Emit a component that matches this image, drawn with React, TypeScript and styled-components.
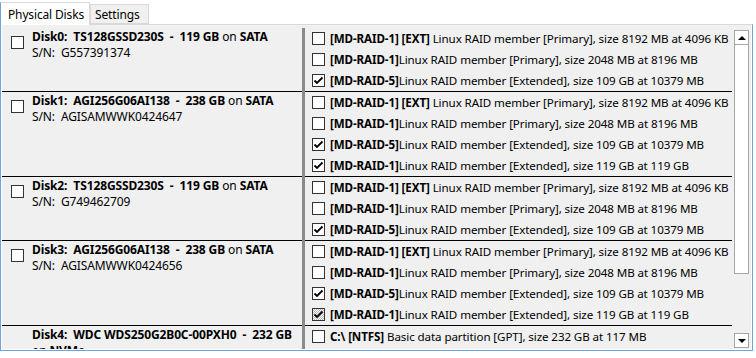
import React from 'react';
import styled, { createGlobalStyle } from 'styled-components';

const GlobalStyle = createGlobalStyle`
  html, body {
    margin: 0;
    padding: 0;
    background: #ffffff;
  }
  body {
    font-family: "Noto Sans", "Segoe UI", sans-serif;
    font-size: 12px;
    color: #000000;
  }
`;

const Window = styled.div`
  width: 756px;
  height: 358px;
  overflow: hidden;
  background: #ffffff;
`;

const TabStrip = styled.div`
  display: flex;
  align-items: flex-end;
  height: 24px;
`;

const Tab = styled.div<{ $active?: boolean }>`
  box-sizing: border-box;
  display: flex;
  align-items: center;
  height: ${({ $active }) => ($active ? '23px' : '20px')};
  padding: ${({ $active }) => ($active ? '0 5px 0 7px' : '0 9px 0 4px')};
  margin-bottom: ${({ $active }) => ($active ? '-1px' : '0')};
  background: ${({ $active }) => ($active ? '#ffffff' : '#f0f0f0')};
  border: 1px solid #d9d9d9;
  border-left-color: ${({ $active }) => ($active ? '#6fa3dc' : '#d9d9d9')};
  border-bottom: ${({ $active }) => ($active ? 'none' : '1px solid #d9d9d9')};
  position: relative;
  z-index: ${({ $active }) => ($active ? 1 : 0)};
  white-space: nowrap;
  letter-spacing: -0.15px;
`;

const Panel = styled.div`
  box-sizing: border-box;
  width: 753px;
  height: 327px;
  border: 1px solid #6fa3dc;
  border-top-color: #d9d9d9;
  padding: 0 1px 1px 1px;
  background: #ffffff;
`;

const ListArea = styled.div`
  display: flex;
  height: 100%;
  background: #f0f0f0;
  padding-top: 3px;
  box-sizing: border-box;
`;

const Rows = styled.div`
  flex: 1;
  overflow: hidden;
`;

const DiskRow = styled.div`
  display: grid;
  grid-template-columns: 300px 3px 1fr;
`;

const LeftCell = styled.div`
  display: flex;
  align-items: flex-start;
  gap: 8px;
  padding: 1px 4px 0 9px;
  border-bottom: 1px solid #000000;
  min-width: 0;
`;

const Divider = styled.div`
  background: #8a8a8a;
`;

const RightCell = styled.div`
  border-bottom: 1px solid #000000;
  min-width: 0;
  overflow: hidden;
`;

const DiskInfo = styled.div`
  line-height: 16px;
  min-width: 0;
  letter-spacing: -0.12px;
`;

const Title = styled.div`
  white-space: pre-wrap;
`;

const Strong = styled.span`
  font-weight: 700;
`;

const Serial = styled.div`
  white-space: pre;
`;

const PartItem = styled.div`
  display: flex;
  align-items: center;
  gap: 5px;
  height: 21px;
  padding-left: 7px;
  white-space: pre;
  overflow: hidden;
  font-size: 11.6px;
  letter-spacing: -0.1px;
`;

const Box = styled.span<{ $mixed?: boolean; $offset?: number }>`
  box-sizing: border-box;
  flex: none;
  display: inline-flex;
  align-items: center;
  justify-content: center;
  width: 13px;
  height: 13px;
  margin-top: ${({ $offset }) => $offset ?? 0}px;
  border: 1px solid #333333;
  background: ${({ $mixed }) =>
    $mixed ? 'repeating-conic-gradient(#b8b8b8 0 25%, #ffffff 0 50%) 0 0 / 2px 2px' : '#ffffff'};
`;

const Spacer = styled.span`
  flex: none;
  width: 13px;
`;

const Scrollbar = styled.div`
  flex: none;
  display: flex;
  flex-direction: column;
  width: 15px;
  margin: 2px 2px 1px 2px;
`;

const ArrowButton = styled.div<{ $down?: boolean }>`
  box-sizing: border-box;
  flex: none;
  height: 15px;
  border: 1px solid #a6a6a6;
  background: #ffffff;
  display: flex;
  align-items: center;
  justify-content: center;
  margin-top: ${({ $down }) => ($down ? 'auto' : '0')};

  &::after {
    content: '';
    border-left: 4px solid transparent;
    border-right: 4px solid transparent;
    ${({ $down }) => ($down ? 'border-top: 4px solid #000;' : 'border-bottom: 4px solid #000;')}
  }
`;

const Thumb = styled.div`
  box-sizing: border-box;
  height: 229px;
  border: 1px solid #a6a6a6;
  border-top: none;
  background: #ffffff;
`;

type Part = {
  label: string;
  desc: string;
  checked?: boolean;
  mixed?: boolean;
};

type Disk = {
  name: string;
  model: string;
  size: string;
  bus: string;
  serial: string;
  selectable: boolean;
  parts: Part[];
};

const ext = (checked = false): Part => ({
  label: '[MD-RAID-1] [EXT]',
  desc: ' Linux RAID member [Primary], size 8192 MB at 4096 KB',
  checked,
});
const swap = (): Part => ({
  label: '[MD-RAID-1]',
  desc: 'Linux RAID member [Primary], size 2048 MB at 8196 MB',
});
const raid5 = (): Part => ({
  label: '[MD-RAID-5]',
  desc: 'Linux RAID member [Extended], size 109 GB at 10379 MB',
  checked: true,
});
const raid1 = (mixed = false): Part => ({
  label: '[MD-RAID-1]',
  desc: 'Linux RAID member [Extended], size 119 GB at 119 GB',
  checked: true,
  mixed,
});

const disks: Disk[] = [
  { name: 'Disk0', model: 'TS128GSSD230S', size: '119 GB', bus: 'SATA', serial: 'G557391374', selectable: true, parts: [ext(), swap(), raid5()] },
  { name: 'Disk1', model: 'AGI256G06AI138', size: '238 GB', bus: 'SATA', serial: 'AGISAMWWK0424647', selectable: true, parts: [ext(), swap(), raid5(), raid1()] },
  { name: 'Disk2', model: 'TS128GSSD230S', size: '119 GB', bus: 'SATA', serial: 'G749462709', selectable: true, parts: [ext(), swap(), raid5()] },
  { name: 'Disk3', model: 'AGI256G06AI138', size: '238 GB', bus: 'SATA', serial: 'AGISAMWWK0424656', selectable: true, parts: [ext(), swap(), raid5(), raid1(true)] },
  {
    name: 'Disk4', model: 'WDC WDS250G2B0C-00PXH0', size: '232 GB', bus: 'NVMe', serial: 'WD193R803447', selectable: false,
    parts: [{ label: 'C:\\ [NTFS]', desc: ' Basic data partition [GPT], size 232 GB at 117 MB' }],
  },
];

const Check: React.FC<{ checked?: boolean; mixed?: boolean; offset?: number }> = ({ checked, mixed, offset }) => (
  <Box $mixed={mixed} $offset={offset}>
    {checked && (
      <svg width="11" height="11" viewBox="0 0 11 11">
        <polyline points="1.5,5.5 4,8 9.5,2.5" fill="none" stroke="#000" strokeWidth="1.8" />
      </svg>
    )}
  </Box>
);

const App: React.FC = () => (
  <Window>
    <GlobalStyle />
    <TabStrip>
      <Tab $active>Physical Disks</Tab>
      <Tab>Settings</Tab>
    </TabStrip>
    <Panel>
      <ListArea>
        <Rows>
          {disks.map((disk) => (
            <DiskRow key={disk.name}>
              <LeftCell>
                {disk.selectable ? <Check offset={7} /> : <Spacer />}
                <DiskInfo>
                  <Title>
                    <Strong>{`${disk.name}:  ${disk.model}  -  ${disk.size}`}</Strong> on <Strong>{disk.bus}</Strong>
                  </Title>
                  <Serial>{`S/N:  ${disk.serial}`}</Serial>
                </DiskInfo>
              </LeftCell>
              <Divider />
              <RightCell>
                {disk.parts.map((part, i) => (
                  <PartItem key={i}>
                    <Check checked={part.checked} mixed={part.mixed} />
                    <span>
                      <Strong>{part.label}</Strong>
                      {part.desc}
                    </span>
                  </PartItem>
                ))}
              </RightCell>
            </DiskRow>
          ))}
        </Rows>
        <Scrollbar>
          <ArrowButton />
          <Thumb />
          <ArrowButton $down />
        </Scrollbar>
      </ListArea>
    </Panel>
  </Window>
);

export default App;
